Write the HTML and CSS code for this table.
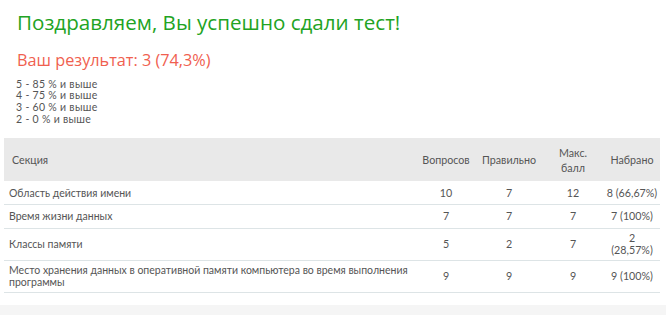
FILE: index.html
```html
<!DOCTYPE html>
<html lang="ru">
<head>
<meta charset="utf-8">
<title>Результат теста</title>
<link rel="stylesheet" href="styles.css">
</head>
<body>
<div class="page">
  <div class="intro">
    <h1 class="title">Поздравляем, Вы успешно сдали тест!</h1>
    <h2 class="result">Ваш результат: 3 (74,3%)</h2>
    <div class="grades">
      <div>5 - 85 % и выше</div>
      <div>4 - 75 % и выше</div>
      <div>3 - 60 % и выше</div>
      <div>2 - 0 % и выше</div>
    </div>
  </div>
  <table class="stats">
    <colgroup>
      <col>
      <col class="c-q">
      <col class="c-r">
      <col class="c-m">
      <col class="c-s">
    </colgroup>
    <thead>
      <tr>
        <th class="name">Секция</th>
        <th>Вопросов</th>
        <th>Правильно</th>
        <th>Макс.<br>балл</th>
        <th>Набрано</th>
      </tr>
    </thead>
    <tbody>
      <tr>
        <td class="name">Область действия имени</td>
        <td>10</td><td>7</td><td>12</td><td>8 (66,67%)</td>
      </tr>
      <tr>
        <td class="name">Время жизни данных</td>
        <td>7</td><td>7</td><td>7</td><td>7 (100%)</td>
      </tr>
      <tr>
        <td class="name">Классы памяти</td>
        <td>5</td><td>2</td><td>7</td><td>2<br>(28,57%)</td>
      </tr>
      <tr>
        <td class="name">Место хранения данных в оперативной памяти компьютера во время выполнения программы</td>
        <td>9</td><td>9</td><td>9</td><td>9 (100%)</td>
      </tr>
    </tbody>
  </table>
</div>
<div class="footer"></div>
</body>
</html>
```
FILE: styles.css
```css
html, body {
  margin: 0;
  padding: 0;
  background: #ffffff;
}
body {
  font-family: Lato, "Open Sans", sans-serif;
  color: #555555;
}
.page {
  padding: 0 6px 0 4px;
}
.intro {
  padding-left: 13px;
}
.title {
  font-family: "Open Sans", sans-serif;
  font-weight: 400;
  font-size: 20.6px;
  line-height: 27px;
  color: #22a323;
  margin: 8.5px 0 0 0;
}
.result {
  font-family: "Open Sans", sans-serif;
  font-weight: 400;
  font-size: 16.25px;
  line-height: 22px;
  color: #f0604f;
  margin: 13px 0 0 0;
}
.grades {
  margin-top: 8px;
  margin-left: -1px;
  font-size: 10.5px;
  letter-spacing: 0.3px;
  line-height: 11.7px;
  color: #555555;
}
.stats {
  margin-top: 13px;
  width: 656px;
  border-collapse: collapse;
  table-layout: fixed;
  font-size: 10.7px;
  color: #555555;
}
.c-q { width: 60px; }
.c-r { width: 66px; }
.c-m { width: 62px; }
.c-s { width: 56px; }
.stats th {
  background: #e9e9e9;
  font-weight: 400;
  height: 43px;
  padding: 0 2px;
  line-height: 15px;
  text-align: center;
  vertical-align: middle;
}
.stats th.name {
  text-align: left;
  padding-left: 8px;
}
.stats tbody tr {
  height: 23.5px;
}
.stats td {
  padding: 3px 2px;
  line-height: 12.5px;
  text-align: center;
  vertical-align: middle;
  border-bottom: 1px solid #dde4e6;
}
.stats td.name {
  font-size: 10.5px;
  text-align: left;
  padding-left: 5px;
  padding-right: 0;
}
.footer {
  margin-top: 12px;
  height: 20px;
  background: #f5f5f5;
}
```
